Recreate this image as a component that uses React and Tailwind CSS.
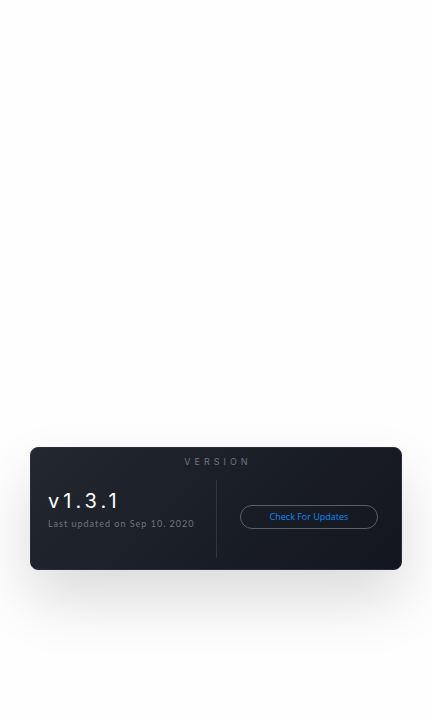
export default function App() {
  return (
    <main className="flex min-h-screen flex-col justify-end bg-[#fefefe] px-[30px] pb-[151px] font-['Inter',sans-serif]">
      <section className="flex flex-col rounded-lg border border-[#292d39] bg-linear-135 from-[#23272f] to-[#13161f] px-[17px] pt-[6px] pb-[11px] shadow-[0_30px_60px_rgba(0,0,0,0.14)]">
        <h2 className="pl-1 text-center text-[9px] leading-4 tracking-[4px] text-[#727382]">VERSION</h2>
        <div className="mt-[10px] grid h-[78px] grid-cols-2">
          <div className="flex flex-col pt-2">
            <p className="text-[20px] leading-[26px] tracking-[4px] text-white">v1.3.1</p>
            <p className="whitespace-nowrap font-['Lato',sans-serif] text-[9px] leading-5 tracking-[1px] text-[#727382]">
              Last updated on Sep 10. 2020
            </p>
          </div>
          <div className="flex items-center border-l border-[#2f3440] pr-[6px] pb-1 pl-[23px]">
            <button type="button" className="h-6 w-full rounded-full border border-[#5c5f6d] font-['Open_Sans',sans-serif] text-[9px] leading-4 text-[#0a8bf5]">
              Check For Updates
            </button>
          </div>
        </div>
      </section>
    </main>
  );
}
